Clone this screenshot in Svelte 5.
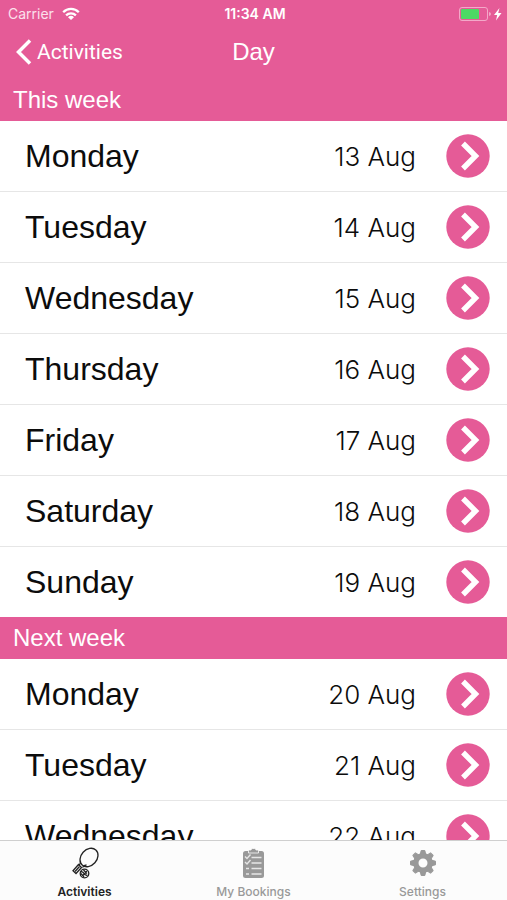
<script lang="ts">
  const sections = [
    {
      title: 'This week',
      days: [
        { name: 'Monday', date: '13 Aug' },
        { name: 'Tuesday', date: '14 Aug' },
        { name: 'Wednesday', date: '15 Aug' },
        { name: 'Thursday', date: '16 Aug' },
        { name: 'Friday', date: '17 Aug' },
        { name: 'Saturday', date: '18 Aug' },
        { name: 'Sunday', date: '19 Aug' }
      ]
    },
    {
      title: 'Next week',
      days: [
        { name: 'Monday', date: '20 Aug' },
        { name: 'Tuesday', date: '21 Aug' },
        { name: 'Wednesday', date: '22 Aug' }
      ]
    }
  ];

  const tabs = ['Activities', 'My Bookings', 'Settings'];
  let activeTab = $state('Activities');

  const teeth = [0, 45, 90, 135, 180, 225, 270, 315];
</script>

<div class="screen">
  <header>
    <div class="status">
      <div class="carrier">
        <span>Carrier</span>
        <svg width="18" height="14" viewBox="0 0 18 14" aria-hidden="true">
          <g fill="none" stroke="#fff" stroke-width="2.3">
            <path d="M1.2 5.2a11 11 0 0 1 15.6 0" />
            <path d="M4.1 8.4a7 7 0 0 1 9.8 0" />
          </g>
          <path d="M9 13 6 10.2a4.3 4.3 0 0 1 6 0z" fill="#fff" />
        </svg>
      </div>
      <span class="time">11:34 AM</span>
      <div class="power">
        <svg width="44" height="16" viewBox="0 0 44 16" aria-hidden="true">
          <rect x="1.5" y="1.5" width="28" height="13" rx="2.5" fill="none" stroke="#f3a9c9" />
          <rect x="3" y="3" width="18" height="10" rx="1" fill="#4cd964" />
          <path d="M31 6v4q2-.5 2-2t-2-2z" fill="#f3a9c9" />
          <path d="M41.5 2 36 9h3.200l-1.200 5.500 5.500-7.500h-3.300z" fill="#fff" />
        </svg>
      </div>
    </div>
    <nav class="navbar">
      <button class="back">
        <svg width="17" height="28" viewBox="0 0 17 28" aria-hidden="true">
          <path d="M15 2.500 3.500 14 15 25.500" fill="none" stroke="#fff" stroke-width="3.5" />
        </svg>
        Activities
      </button>
      <h1>Day</h1>
    </nav>
  </header>

  <main>
    {#each sections as section}
      <section>
        <h2>{section.title}</h2>
        <ul>
          {#each section.days as day}
            <li>
              <button class="row">
                <span class="name">{day.name}</span>
                <span class="date">{day.date}</span>
                <svg width="44" height="44" viewBox="0 0 44 44" aria-hidden="true">
                  <circle cx="22" cy="22" r="21.7" fill="#e55b97" />
                  <path d="M17 9.5 29.500 22 17 34.500" fill="none" stroke="#fff" stroke-width="5.4" />
                </svg>
              </button>
            </li>
          {/each}
        </ul>
      </section>
    {/each}
  </main>

  <nav class="tabbar">
    {#each tabs as tab}
      <button class="tab" class:active={activeTab === tab} onclick={() => (activeTab = tab)}>
        <svg width="32" height="34" viewBox="0 0 32 34" aria-hidden="true">
          {#if tab === 'Activities'}
            <g fill="none" stroke="currentColor" stroke-width="1.3">
              <ellipse cx="20" cy="11.5" rx="10.2" ry="7.9" transform="rotate(-48 20 11.5)" />
              <path d="M11.500 15q.5 2.500-1.500 4.500m7.500-.5q-2.500 0-4 2.500" />
              <path d="m9.500 18.500 3 3-5.500 6-3-2.700z" />
              <path d="m6 25.500 4.500-5" />
              <circle cx="15.500" cy="27.500" r="4.3" />
              <path d="M12 25.500q2.500.5 3 2t3.500 2m-5 .5 4.500-5m-3.500-1 3.500 3.500m-6 0 3 3.500" />
            </g>
          {:else if tab === 'My Bookings'}
            <rect x="5" y="5" width="21" height="27" rx="2.5" fill="currentColor" />
            <path d="M10.500 7V4h2.500q0-1.500 1.500-1.500h2q1.500 0 1.500 1.500h2.500v3z" fill="currentColor" stroke="#fbfbfb" stroke-width=".8" />
            <g fill="none" stroke="#e6e6e6" stroke-width="1.4">
              <path d="M13.500 11.500h10m-10 5.500h10m-10 5.500h10m-10 5.500h10" />
              <path d="m7 10.500 2 2 3.500-4M7 16l2 2 3.500-4M8 22.500h3M8 28h3" />
            </g>
          {:else}
            <g fill="currentColor" stroke="currentColor" stroke-linejoin="round">
              {#each teeth as angle}
                <path d="M13 9.500 14.200 4.500h3.600L19 9.500z" transform={`rotate(${angle} 16 17)`} />
              {/each}
            </g>
            <circle cx="16" cy="17" r="7.2" fill="none" stroke="currentColor" stroke-width="5.4" />
          {/if}
        </svg>
        <span>{tab}</span>
      </button>
    {/each}
  </nav>
</div>

<style>
  :global(body) {
    margin: 0;
  }

  .screen {
    display: flex;
    flex-direction: column;
    height: 100vh;
    background: #fff;
    font-family: 'Liberation Sans', Arial, sans-serif;
    color: #0c0c0c;
  }

  button {
    margin: 0;
    padding: 0;
    border: none;
    background: none;
    color: inherit;
    font: inherit;
    cursor: pointer;
  }

  svg {
    display: block;
    flex: none;
  }

  header {
    background: #e55b97;
    color: #fff;
  }

  .status {
    display: grid;
    grid-template-columns: 1fr auto 1fr;
    align-items: center;
    height: 27px;
    padding: 0 5px 0 8px;
    font-family: Inter, sans-serif;
    font-size: 14px;
  }

  .carrier {
    display: flex;
    align-items: center;
    gap: 8px;
    color: #fbe0ec;
  }

  .time {
    font-weight: 600;
  }

  .power {
    display: flex;
    justify-content: flex-end;
  }

  .navbar {
    display: grid;
    grid-template-columns: 1fr auto 1fr;
    align-items: center;
    height: 50px;
    padding: 0 15px;
  }

  .back {
    display: flex;
    align-items: center;
    justify-self: start;
    gap: 5px;
    font-family: Roboto, sans-serif;
    font-size: 21px;
  }

  h1 {
    margin: 0;
    font-size: 24px;
    font-weight: 400;
  }

  main {
    flex: 1;
    min-height: 0;
    overflow-y: auto;
    scrollbar-width: none;
  }

  h2 {
    margin: 0;
    padding: 5px 13px;
    background: #e55b97;
    color: #fff;
    font-size: 24px;
    font-weight: 400;
    line-height: 32px;
  }

  section:first-child h2 {
    padding-top: 7px;
  }

  ul {
    margin: 0;
    padding: 0;
    list-style: none;
  }

  li {
    border-bottom: 1px solid #e6e6e6;
  }

  li:last-child {
    border-bottom: none;
  }

  .row {
    display: flex;
    align-items: center;
    width: 100%;
    height: 70px;
    padding: 0 17px 0 25px;
    text-align: left;
  }

  .name {
    flex: 1;
    font-size: 32px;
  }

  .date {
    margin-right: 30px;
    font-family: Inter, 'Liberation Sans', sans-serif;
    font-size: 26px;
    font-weight: 300;
  }

  .tabbar {
    display: grid;
    grid-template-columns: repeat(3, 1fr);
    border-top: 1px solid #cfcfcf;
    background: #fcfcfc;
  }

  .tab {
    display: flex;
    flex-direction: column;
    align-items: center;
    gap: 4px;
    height: 59px;
    padding-top: 5px;
    color: #999;
    font-family: Inter, sans-serif;
    font-size: 12px;
    font-weight: 500;
    line-height: 16px;
  }

  .tab.active {
    color: #222;
    font-weight: 600;
  }
</style>
